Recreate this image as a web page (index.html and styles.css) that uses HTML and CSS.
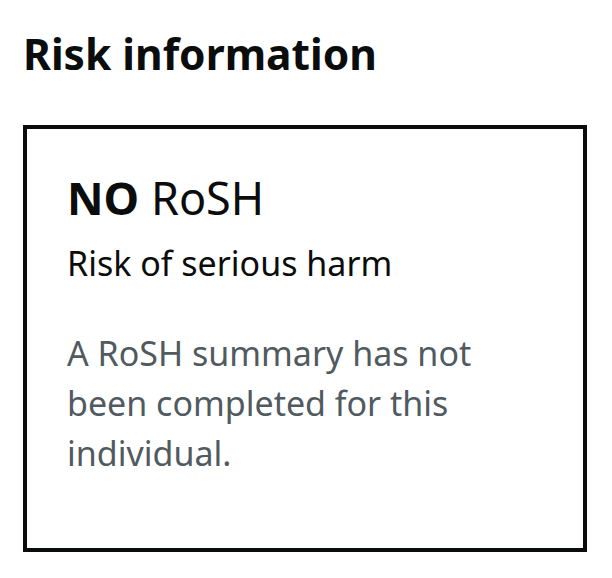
FILE: index.html
```html
<!DOCTYPE html>
<html lang="en">
<head>
<meta charset="utf-8">
<title>Risk information</title>
<link rel="stylesheet" href="styles.css">
</head>
<body>
<main class="page">
  <h2 class="heading">Risk information</h2>
  <section class="risk-card">
    <p class="risk-level"><strong>NO</strong> RoSH</p>
    <p class="risk-label">Risk of serious harm</p>
    <p class="risk-note">A RoSH summary has not been completed for this individual.</p>
  </section>
</main>
</body>
</html>
```
FILE: styles.css
```css
html, body {
  margin: 0;
  padding: 0;
  background: #ffffff;
}
body {
  font-family: "Noto Sans", "Open Sans", sans-serif;
  color: #0b0c0c;
}
.page {
  padding: 29px 25px 0 23px;
}
.heading {
  margin: 0;
  font-size: 42.5px;
  line-height: 50px;
  font-weight: 700;
}
.risk-card {
  margin-top: 46px;
  border: 4px solid #0b0c0c;
  padding: 44px 40px 30px 40px;
  height: 427px;
  box-sizing: border-box;
}
.risk-card p {
  margin: 0;
}
.risk-level {
  font-size: 45px;
  line-height: 50px;
  font-weight: 400;
}
.risk-level strong {
  font-weight: 700;
}
.risk-label {
  margin-top: 15px !important;
  font-size: 34px;
  line-height: 50px;
}
.risk-note {
  margin-top: 40px !important;
  font-size: 34px;
  line-height: 50px;
  color: #505a5f;
}
```
